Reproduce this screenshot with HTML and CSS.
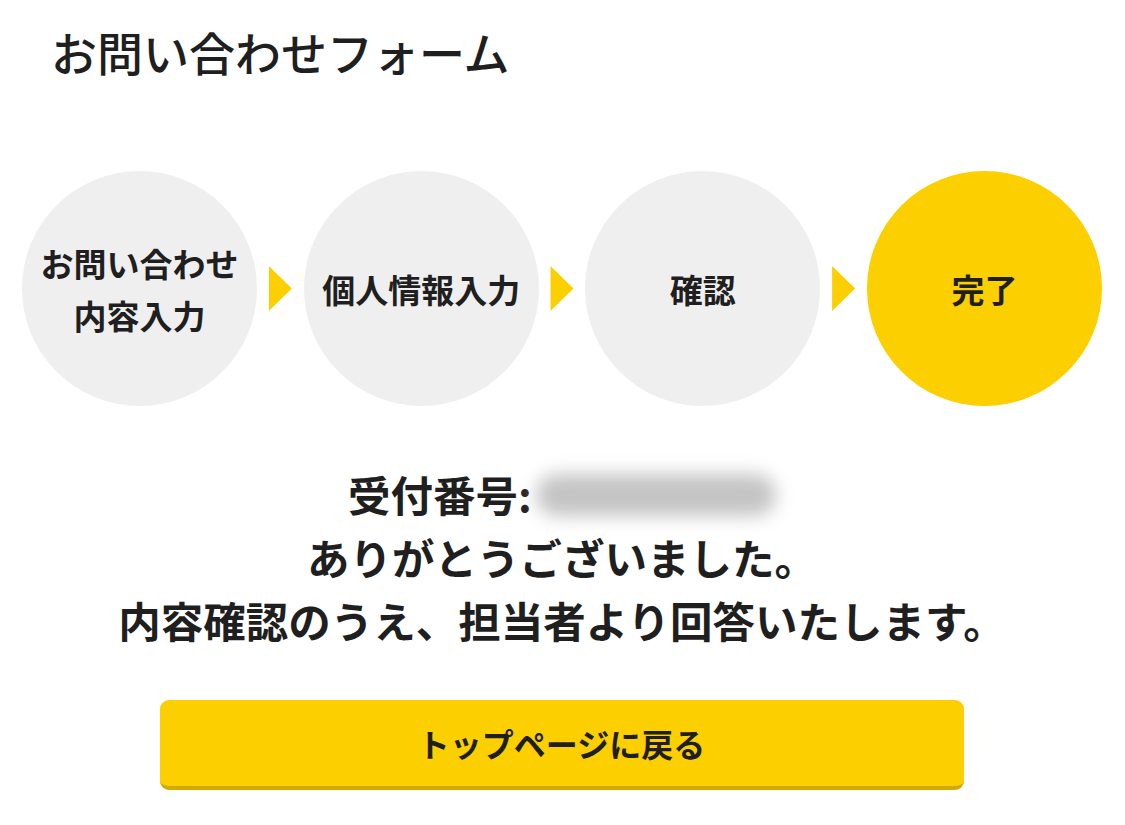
FILE: index.html
```html
<!DOCTYPE html>
<html lang="ja">
<head>
<meta charset="utf-8">
<title>お問い合わせフォーム</title>
<link rel="stylesheet" href="styles.css">
</head>
<body>
<main class="page">
  <h1 class="title">お問い合わせフォーム</h1>
  <ol class="steps">
    <li class="step">お問い合わせ<br>内容入力</li>
    <li class="arrow" aria-hidden="true"></li>
    <li class="step">個人情報入力</li>
    <li class="arrow" aria-hidden="true"></li>
    <li class="step">確認</li>
    <li class="arrow" aria-hidden="true"></li>
    <li class="step step-current">完了</li>
  </ol>
  <div class="message">
    <p class="line">受付番号:<span class="masked"></span></p>
    <p class="line">ありがとうございました。</p>
    <p class="line">内容確認のうえ、担当者より回答いたします。</p>
  </div>
  <div class="actions">
    <a class="btn" href="#">トップページに戻る</a>
  </div>
</main>
</body>
</html>
```

FILE: styles.css
```css
* { box-sizing: border-box; }

html, body {
  margin: 0;
  padding: 0;
  background: #ffffff;
}

body {
  font-family: "Noto Sans CJK JP", "Noto Sans", sans-serif;
  color: #1f1f1f;
}

.page {
  width: 1125px;
  padding: 21px 23px 0 22px;
}

.title {
  margin: 0 0 0 29px;
  font-size: 46px;
  line-height: 60px;
  font-weight: 500;
  letter-spacing: 0;
}

.steps {
  list-style: none;
  margin: 90px 0 0 0;
  padding: 0;
  display: flex;
  align-items: center;
  justify-content: space-between;
  width: 1080px;
}

.step {
  width: 235px;
  height: 235px;
  border-radius: 50%;
  background: #efefef;
  display: flex;
  align-items: center;
  justify-content: center;
  text-align: center;
  font-size: 33px;
  line-height: 52px;
  font-weight: 700;
  color: #1f1f1f;
}

.step-current {
  background: #fbcf00;
}

.arrow {
  width: 23px;
  height: 45px;
  background: #fbcf00;
  clip-path: polygon(0 0, 100% 50%, 0 100%);
}

.message {
  margin-top: 56px;
  text-align: center;
}

.line {
  margin: 0;
  font-size: 42.5px;
  line-height: 63px;
  font-weight: 700;
  color: #1f1f1f;
}

.masked {
  display: inline-block;
  width: 240px;
  height: 42px;
  margin-left: 4px;
  vertical-align: -4px;
  border-radius: 21px;
  background: #c4c4c4;
  filter: blur(9px);
}

.actions {
  margin-top: 49px;
  display: flex;
  justify-content: center;
}

.btn {
  display: flex;
  align-items: center;
  justify-content: center;
  width: 804px;
  height: 90px;
  margin-right: 1px;
  border-radius: 9px;
  background: #fbcf00;
  border-bottom: 4px solid #d3aa00;
  color: #1f1f1f;
  text-decoration: none;
  font-size: 32px;
  font-weight: 700;
  line-height: 1;
}
```
